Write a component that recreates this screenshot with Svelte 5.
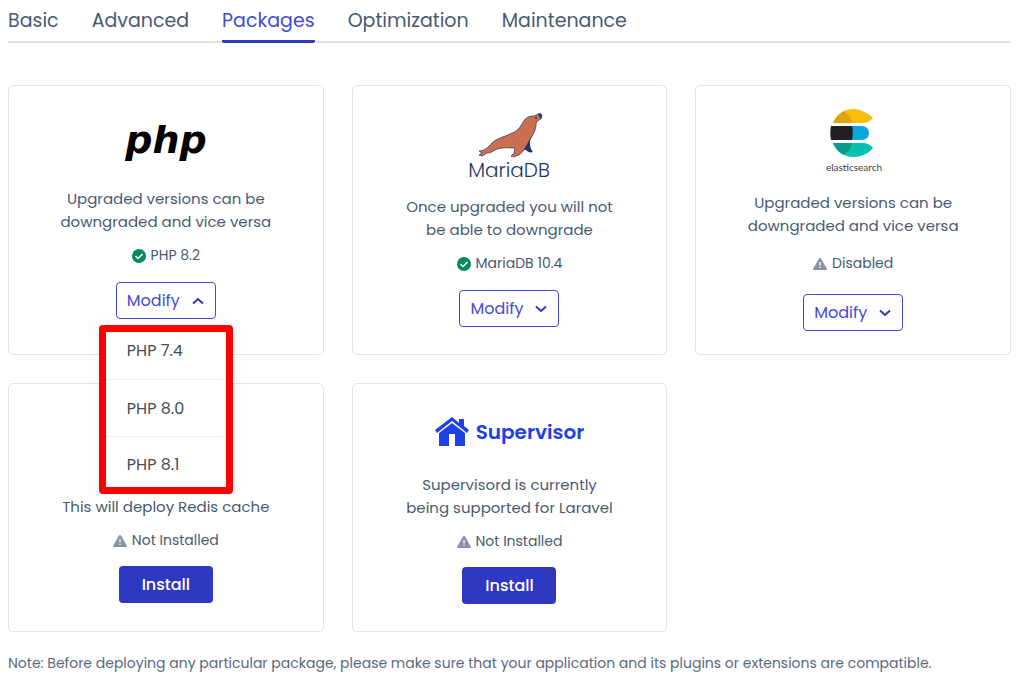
<script lang="ts">
  type Package = {
    id: string;
    lines: string[];
    status: string;
    state: 'ok' | 'disabled' | 'missing';
    versions?: string[];
  };

  const tabs = ['Basic', 'Advanced', 'Packages', 'Optimization', 'Maintenance'];

  const packages: Package[] = [
    {
      id: 'php',
      lines: ['Upgraded versions can be', 'downgraded and vice versa'],
      status: 'PHP 8.2',
      state: 'ok',
      versions: ['PHP 7.4', 'PHP 8.0', 'PHP 8.1'],
    },
    {
      id: 'mariadb',
      lines: ['Once upgraded you will not', 'be able to downgrade'],
      status: 'MariaDB 10.4',
      state: 'ok',
      versions: ['MariaDB 10.5', 'MariaDB 10.6'],
    },
    {
      id: 'elastic',
      lines: ['Upgraded versions can be', 'downgraded and vice versa'],
      status: 'Disabled',
      state: 'disabled',
      versions: ['7.17', '8.5'],
    },
    { id: 'redis', lines: ['This will deploy Redis cache'], status: 'Not Installed', state: 'missing' },
    {
      id: 'supervisor',
      lines: ['Supervisord is currently', 'being supported for Laravel'],
      status: 'Not Installed',
      state: 'missing',
    },
  ];

  let active = $state('Packages');
  let open = $state('php');

  function toggle(id: string) {
    open = open === id ? '' : id;
  }
</script>

<main>
  <nav>
    {#each tabs as tab}
      <button class="tab" class:active={tab === active} onclick={() => (active = tab)}>{tab}</button>
    {/each}
  </nav>

  <div class="grid">
    {#each packages as pkg}
      <section class="card">
        <div class="logo {pkg.id}">
          {#if pkg.id === 'php'}
            <svg width="92" height="44" viewBox="-4 0 92 44">
              <text class="php-text" x="42" y="33" text-anchor="middle">php</text>
            </svg>
          {:else if pkg.id === 'mariadb'}
            <svg width="92" height="66" viewBox="-3 0 92 66">
              <path fill="#1f3766" d="M69 17c-2 5-5 8-5 13 0 4 1 7 3 9-3 1-5 0-7-2-2 0-4 0-6-2L46 32l12-12z" />
              <path
                fill="#ca7050"
                stroke="#34436b"
                stroke-width=".8"
                stroke-linejoin="round"
                d="M13 38c6 0 9-4 13-8 5-5 12-6 18-9 6-2 9-5 12-10 3-6 6-8 12-8l4-2c2-1 4 0 4 2l-1 3c-4 2-5 3-5 7-1 7-5 11-8 17-3 5-6 12-12 13-2 1-4 1-5 0l3-3 1-5c-5 0-11-1-18 1-4 2-6 4-10 4l-5 3-3-1 3-2z"
              />
              <path fill="#1f3766" d="M72 1c2-1 4 0 4 3l-2 1z" />
              <circle cx="70" cy="5" r="1" fill="#1f3766" />
              <text class="maria-text" x="43" y="64" text-anchor="middle">MariaDB</text>
            </svg>
          {:else if pkg.id === 'elastic'}
            <svg width="64" height="66" viewBox="0 0 64 66">
              <path fill="#f9bd0c" d="M12 14C16 5 23 0 32 0c8 0 15 4 20 9-3 3-6 5-10 5z" />
              <path fill="#dfa30e" d="M12 14C14 9 18 5 23 2c4 3 7 7 8 12z" />
              <path fill="#08a5df" d="M30 17h11a7 7 0 0 1 0 14H30z" />
              <path fill="#231f20" d="M10 17h21c1 5 1 9 0 14H10c-1-5-1-9 0-14z" />
              <path fill="#07c0b0" d="M12 34h30c4 0 8 2 10 5-5 6-12 9-20 9s-16-5-20-14z" />
              <path fill="#079b8c" d="M12 34h19c-1 5-4 9-8 12-5-2-9-7-11-12z" />
              <text class="elastic-text" x="33" y="62" text-anchor="middle">elasticsearch</text>
            </svg>
          {:else if pkg.id === 'supervisor'}
            <svg width="34" height="30" viewBox="0 0 34 30">
              <path fill="#1f40e3" d="M17 0 0 13l2 3L17 4l15 12 2-3-5-4V2h-5v4z" />
              <path fill="#1f40e3" d="M17 6 4 16v13h10V17h6v12h10V16z" />
            </svg>
            <span>Supervisor</span>
          {/if}
        </div>

        <p class="description">
          {#each pkg.lines as line}<span>{line}</span>{/each}
        </p>

        <div class="status {pkg.state}">
          {#if pkg.state === 'ok'}
            <svg width="14" height="14" viewBox="0 0 14 14">
              <circle cx="7" cy="7" r="7" fill="#078a5d" />
              <path d="m3.500 7 2.500 2.500 4.500-4.500" fill="none" stroke="#fff" stroke-width="1.500" />
            </svg>
          {:else}
            <svg width="14" height="12" viewBox="0 0 14 12">
              <path fill="#8993a4" d="M7 0c.6 0 1 .4 1.300 1l5.400 9.500c.5.800 0 1.500-.8 1.500H1.100c-.8 0-1.300-.7-.8-1.500L5.700 1C6 .4 6.400 0 7 0z" />
              <path stroke="#fff" stroke-width="1.300" d="M7 4v3.500M7 8.700V10" />
            </svg>
          {/if}
          {pkg.status}
        </div>

        {#if pkg.versions}
          <div class="dropdown">
            <button class="modify" aria-expanded={open === pkg.id} onclick={() => toggle(pkg.id)}>
              Modify
              <svg class:flip={open === pkg.id} width="12" height="8" viewBox="0 0 12 8">
                <path d="m1 1.500 5 4.500 5-4.500" fill="none" stroke="currentColor" stroke-width="2" />
              </svg>
            </button>
            {#if open === pkg.id}
              <div class="menu">
                {#each pkg.versions as version}
                  <button onclick={() => (open = '')}>{version}</button>
                {/each}
              </div>
            {/if}
          </div>
        {:else}
          <button class="install">Install</button>
        {/if}
      </section>
    {/each}
  </div>

  <p class="note">
    Note: Before deploying any particular package, please make sure that your application and its plugins or extensions
    are compatible.
  </p>
</main>

<style>
  :global(body) {
    margin: 0;
    background: #fff;
  }

  main {
    padding: 0 13px 0 8px;
    font-family: Poppins, Inter, sans-serif;
    font-size: 15px;
    line-height: 23px;
    color: #4a5972;
  }

  button {
    padding: 0;
    border: 0;
    background: none;
    font: inherit;
    color: inherit;
    cursor: pointer;
  }

  nav {
    display: flex;
    gap: 33px;
    height: 41px;
    border-bottom: 2px solid #e2e3e7;
  }

  .tab {
    box-sizing: border-box;
    height: 43px;
    padding-top: 1px;
    border-bottom: 3px solid transparent;
    font-size: 19px;
  }

  .tab.active {
    border-color: #2f38c0;
    border-radius: 2px;
    color: #444bd3;
  }

  .grid {
    display: grid;
    grid-template-columns: repeat(3, 1fr);
    grid-auto-rows: minmax(249px, auto);
    gap: 28px;
    margin-top: 42px;
  }

  .card {
    display: flex;
    flex-direction: column;
    align-items: center;
    padding: 22px 16px 23px;
    border: 1px solid #e2e4e9;
    border-radius: 5px;
  }

  .logo {
    display: flex;
    align-items: center;
    justify-content: center;
    height: 80px;
  }

  .logo svg {
    overflow: visible;
  }

  .logo.php {
    height: 68px;
    padding-bottom: 11px;
  }

  .logo.mariadb {
    height: 75px;
    padding-bottom: 12px;
  }

  .logo.elastic {
    height: 67px;
    padding-bottom: 16px;
  }

  .logo.redis {
    height: 89px;
  }

  .logo.supervisor {
    gap: 7px;
    height: 52px;
    padding-bottom: 15px;
    font-size: 20px;
    font-weight: 600;
    color: #1f40e3;
  }

  .php-text {
    font: italic 700 38px 'DejaVu Sans', sans-serif;
    fill: #000;
  }

  .maria-text {
    font: 300 20px Poppins, Lato, sans-serif;
    fill: #1f3766;
  }

  .elastic-text {
    font: 10px Lato, sans-serif;
    fill: #3d3d3d;
  }

  .description {
    margin: 0 0 11px;
    text-align: center;
  }

  .description span {
    display: block;
  }

  .status {
    display: flex;
    align-items: center;
    gap: 5px;
    margin-bottom: 15px;
    font-size: 14px;
  }

  .status.disabled {
    line-height: 31px;
  }

  .status.missing {
    margin-bottom: 14px;
  }

  .dropdown {
    position: relative;
  }

  .modify {
    display: flex;
    align-items: center;
    justify-content: space-between;
    gap: 10px;
    box-sizing: border-box;
    min-width: 100px;
    height: 37px;
    padding: 0 11px 0 10px;
    border: 1px solid #444bd3;
    border-radius: 4px;
    font-size: 16px;
    color: #444bd3;
  }

  .modify svg {
    color: #3038c2;
  }

  .modify .flip {
    transform: rotate(180deg);
  }

  .menu {
    position: absolute;
    z-index: 1;
    top: 43px;
    left: -17px;
    box-sizing: border-box;
    width: 134px;
    padding-right: 2px;
    border: 7px solid #fe0000;
    border-radius: 4px;
    background: #fff;
    box-shadow: 0 0 24px rgba(0, 0, 0, 0.04);
  }

  .menu button {
    display: block;
    width: 100%;
    height: 57px;
    padding-left: 21px;
    border-bottom: 1px solid #f1f1f3;
    font-size: 16px;
    text-align: left;
    color: #454d59;
  }

  .menu button:first-child {
    height: 48px;
    padding-bottom: 10px;
  }

  .menu button:last-child {
    height: 50px;
    padding-top: 4px;
    border-bottom: 0;
  }

  .install {
    min-width: 94px;
    height: 37px;
    border-radius: 4px;
    background: #2f38c0;
    font-size: 16px;
    font-weight: 500;
    color: #fff;
  }

  .note {
    margin: 20px 0 0;
    font-size: 14px;
    color: #5b6880;
  }
</style>
